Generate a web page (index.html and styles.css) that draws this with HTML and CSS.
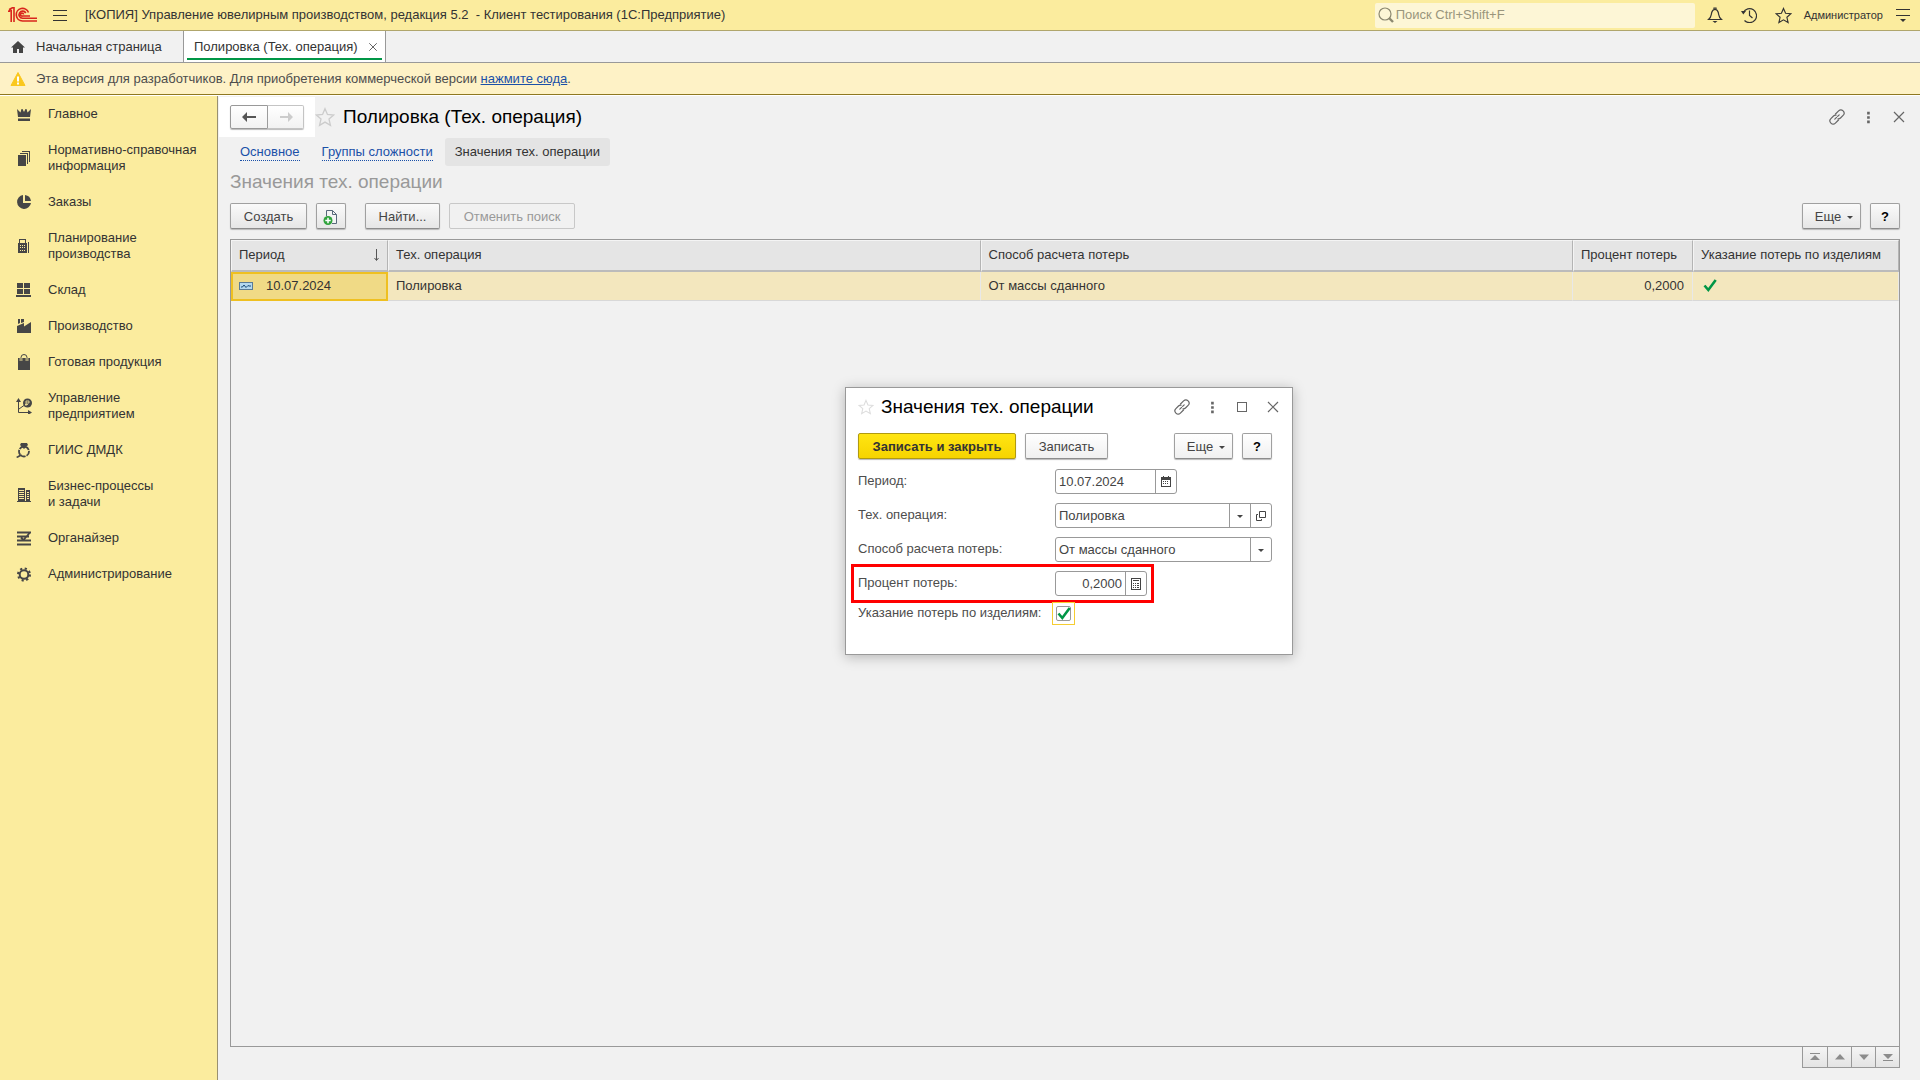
FILE: index.html
```html
<!DOCTYPE html>
<html lang="ru">
<head>
<meta charset="utf-8">
<title>Полировка (Тех. операция)</title>
<link rel="stylesheet" href="styles.css">
</head>
<body>
<svg class="defs" aria-hidden="true">
  <symbol id="i-star" viewBox="0 0 18 18"><path d="M9 1.500l2.200 5.200 5.600.5-4.200 3.700 1.300 5.600L9 13.600l-4.900 2.900 1.300-5.600L1.200 7.200l5.600-.5z" fill="none" stroke="currentColor" stroke-width="1.200"/></symbol>
  <symbol id="i-link" viewBox="0 0 16 16"><g fill="none" stroke="currentColor" stroke-width="1.200" stroke-linecap="round"><path d="M6.500 5L9.600 1.900a3.100 3.100 0 0 1 4.500 4.500L11.500 9a3 3 0 0 1-2.500.9"/><path d="M9.500 11l-3.100 3.100a3.100 3.100 0 0 1-4.500-4.500L4.500 7A3 3 0 0 1 7 6.100"/><path d="M5.800 10.200l4.400-4.400" stroke-dasharray="2.500 1.500"/></g></symbol>
  <symbol id="i-dots" viewBox="0 0 16 16"><path d="M7 2h3v3H7zM7 7h3v3H7zM7 12h3v3H7z" fill="currentColor"/></symbol>
  <symbol id="i-close" viewBox="0 0 16 16"><path d="M3 3l10 10M13 3L3 13" stroke="currentColor" stroke-width="1.200"/></symbol>
  <symbol id="i-down" viewBox="0 0 8 8"><path d="M1 3h6L4 6z" fill="currentColor"/></symbol>
  <symbol id="i-check" viewBox="0 0 16 16"><path d="M2.500 7.500l3.800 4.500L13.700 2" fill="none" stroke="#009646" stroke-width="2.600"/></symbol>
</svg>

<header class="topbar">
  <svg class="logo" viewBox="0 0 30 16" aria-label="1С" role="img"><g fill="none" stroke="#d9251c" stroke-width="1.600"><path d="M0 4.200h2.200M1.200 2.500L4 1M3.200 3v12M6 15V.800H4.200L1 3.500"/><path d="M20.500 5.500A6.300 6.300 0 1 0 14.500 14H29"/><path d="M17.800 6A3.600 3.600 0 1 0 14.500 11.300H29"/><path d="M15.500 7.500a1.500 1.500 0 1 0-1 1.500H22"/></g></svg>
  <button class="icon-btn burger" aria-label="Меню"><svg width="14" height="14" viewBox="0 0 14 14"><path d="M0 2.500h14M0 7.500h14M0 12.500h14" stroke="currentColor"/></svg></button>
  <div class="app-title">[КОПИЯ] Управление ювелирным производством, редакция 5.2&nbsp; - Клиент тестирования (1С:Предприятие)</div>
  <label class="search">
    <svg width="16" height="16" viewBox="0 0 16 16"><circle cx="7" cy="7" r="6" fill="none" stroke="currentColor" stroke-width="1.200"/><path d="M11 11l4 4" stroke="currentColor" stroke-width="2.400"/></svg>
    <input type="text" placeholder="Поиск Ctrl+Shift+F" aria-label="Поиск">
  </label>
  <div class="top-tools">
    <button class="icon-btn" aria-label="Уведомления"><svg width="16" height="16" viewBox="0 0 16 16"><path d="M1.500 12.500h13c-3-2.500-2.500-4-3.200-7C10.800 3.500 9.500 2.500 8 2.500S5.200 3.500 4.700 5.500c-.7 3-.2 4.500-3.200 7zM7 2.500V1h2v1.500" fill="none" stroke="currentColor" stroke-width="1.200"/><path d="M5.500 14h5L8 16z" fill="currentColor"/></svg></button>
    <button class="icon-btn" aria-label="История"><svg width="16" height="16" viewBox="0 0 16 16"><path d="M2.300 5.500A7 7 0 1 1 3.500 13.500M8.500 3.500v5l3 2.500" fill="none" stroke="currentColor" stroke-width="1.200"/><path d="M0 4h5L2.300 7.500z" fill="currentColor"/></svg></button>
    <button class="icon-btn" aria-label="Избранное"><svg width="17" height="17"><use href="#i-star"/></svg></button>
  </div>
  <a class="user" href="#">Администратор</a>
  <button class="icon-btn" aria-label="Настройки"><svg width="14" height="14" viewBox="0 0 14 14"><path d="M0 1.500h14M0 7.500h14" stroke="currentColor"/><path d="M4 11h6l-3 3z" fill="currentColor"/></svg></button>
</header>

<nav class="tabs">
  <a class="tab home" href="#"><svg width="16" height="14" viewBox="0 0 16 14"><path d="M8 1L1 7.500h2V13h4V9h2v4h4V7.500h2z" fill="#444"/></svg>Начальная страница</a>
  <a class="tab current" href="#"><span>Полировка (Тех. операция)</span><svg width="12" height="12"><use href="#i-close"/></svg></a>
</nav>

<div class="notice">
  <svg width="16" height="16" viewBox="0 0 16 16"><path d="M8 1.500L15 14.500H1z" fill="#fac81e" stroke="#fac81e" stroke-linejoin="round"/><path d="M7 5.500h2v5H7zM7 11.500h2v2H7z" fill="#fff"/></svg>
  <p>Эта версия для разработчиков. Для приобретения коммерческой версии <a href="#">нажмите сюда</a>.</p>
</div>

<div class="workspace">
  <nav class="sidebar">
    <a href="#"><svg viewBox="0 0 16 16"><path d="M1 3l3.500 3.500L5.500 3h1L8 6l1.500-3h1l1 3.500L15 3l-1 8H2zM2 12.500h12V15H2z"/></svg>Главное</a>
    <a href="#"><svg viewBox="0 0 16 16"><path d="M2 5h8v11H2zM4 3h8v11h-1V4H4zM6 1h8v11h-1V2H6z"/></svg>Нормативно-справочная<br>информация</a>
    <a href="#"><svg viewBox="0 0 16 16"><path d="M7 1v8h8A7 7 0 1 1 7 1zM9 1a7 7 0 0 1 6 6H9z"/></svg>Заказы</a>
    <a href="#"><svg viewBox="0 0 16 16"><path fill-rule="evenodd" d="M2 5h1V1h7v4h1v10H2zM4 2v3h5V2zM4 7v1h1V7zm2 0v1h1V7zm2 0v1h1V7zM4 9v1h1V9zm2 0v1h1V9zm2 0v1h1V9zm-4 3v1h1v-1zm2 0v1h1v-1zm2 0v1h1v-1zM12 4h1v11h-1z"/></svg>Планирование<br>производства</a>
    <a href="#"><svg viewBox="0 0 16 16"><path d="M1 1h6v5H1zM8 1h6v5H8zM1 7h6v5H1zM8 7h6v5H8zM0 13h15v2H0z"/></svg>Склад</a>
    <a href="#"><svg viewBox="0 0 16 16"><path d="M2 1h2v4l-2 1zM5 1h3v3L5 5zM1 8l7-3v3.500L15 4v11H1z"/></svg>Производство</a>
    <a href="#"><svg viewBox="0 0 16 16"><path d="M2 4h12v12H2z"/><path d="M5 7V4a3 3 0 0 1 6 0v3" fill="none" stroke="#fbec9e" stroke-width="2.600"/><path d="M5 7V3.500a3 3 0 0 1 6 0V7" fill="none" stroke="#464646"/></svg>Готовая продукция</a>
    <a href="#"><svg viewBox="0 0 16 16"><path d="M2.500 3v11.500H14M3 11l7-5" fill="none" stroke="#464646"/><path d="M2.500 0L5 4H0zM16 14.500L12 12v5z"/><circle cx="11.500" cy="5" r="4.500"/><path d="M10 3h3v2h-3zM10 5v3M9 6.500h3" fill="none" stroke="#fbec9e" stroke-width=".800"/></svg>Управление<br>предприятием</a>
    <a href="#"><svg viewBox="0 0 16 16"><circle cx="8" cy="9.500" r="5" fill="none" stroke="#464646" stroke-width="1.800" stroke-dasharray="5 1"/><path d="M5 1h6l1 2-4 4-4-4zM5 12l1 1.500L1.500 16 0 15z"/></svg>ГИИС ДМДК</a>
    <a href="#"><svg viewBox="0 0 16 16"><path fill-rule="evenodd" d="M2 2h7v13H2zM3 4v1h5V4zm0 2v1h5V6zm0 2v1h5V8zm0 2v1h5v-1zm0 2v1h5v-1zM10 4h4v11h-4zm1 2v1h2V6zm0 2v1h2V8zm0 2v1h2v-1zm0 2v1h2v-1zM1 15h14v1H1z"/></svg>Бизнес-процессы<br>и задачи</a>
    <a href="#"><svg viewBox="0 0 16 16"><path d="M1 2.500h14M1 6.500h12M1 10.500h14M1 14.500h14M14 2.500L7.500 10 5 7.500" fill="none" stroke="#464646" stroke-width="1.800"/></svg>Органайзер</a>
    <a href="#"><svg viewBox="0 0 16 16"><circle cx="8" cy="8.500" r="4.300" fill="none" stroke="#464646" stroke-width="2"/><circle cx="8" cy="8.500" r="6" fill="none" stroke="#464646" stroke-width="2" stroke-dasharray="2.200 2.512"/></svg>Администрирование</a>
  </nav>

  <main class="page">
    <div class="page-head">
      <div class="history">
        <button aria-label="Назад"><svg width="16" height="12" viewBox="0 0 16 12"><path d="M6 1v4h9v2H6v4L1 6z" fill="#555"/></svg></button><button aria-label="Вперед" disabled><svg width="16" height="12" viewBox="0 0 16 12"><path d="M10 1v4H2v2h8v4l5-5z" fill="#ccc"/></svg></button>
      </div>
      <svg class="fav" width="20" height="20"><use href="#i-star"/></svg>
      <h1>Полировка (Тех. операция)</h1>
      <div class="window-tools">
        <button class="icon-btn" aria-label="Ссылка"><svg width="16" height="16"><use href="#i-link"/></svg></button>
        <button class="icon-btn" aria-label="Действия"><svg width="14" height="14"><use href="#i-dots"/></svg></button>
        <button class="icon-btn" aria-label="Закрыть"><svg width="16" height="16"><use href="#i-close"/></svg></button>
      </div>
    </div>
    <nav class="sections">
      <a href="#"><span>Основное</span></a>
      <a href="#"><span>Группы сложности</span></a>
      <a class="current" href="#">Значения тех. операции</a>
    </nav>
    <h2>Значения тех. операции</h2>
    <div class="toolbar">
      <button class="btn w-create">Создать</button>
      <button class="btn w-icon" aria-label="Скопировать"><svg width="16" height="18" viewBox="0 0 16 18"><path d="M3.500 8V2.500h6l4 4v9H9M9.500 2.500v4h4" fill="#f4f4f4" stroke="#57687a"/><circle cx="5" cy="12.500" r="4.500" fill="#2fa23c"/><path d="M5 9.800v5.400M2.300 12.500h5.400" stroke="#fff" stroke-width="1.500"/></svg></button>
      <button class="btn w-find">Найти...</button>
      <button class="btn w-cancel" disabled>Отменить поиск</button>
      <span class="spacer"></span>
      <button class="btn w-more">Еще<svg width="8" height="8"><use href="#i-down"/></svg></button>
      <button class="btn w-icon help">?</button>
    </div>
    <div class="grid">
      <table>
        <colgroup><col class="c-date"><col><col><col class="c-pct"><col class="c-flag"></colgroup>
        <thead><tr>
          <th><div class="cell"><span>Период</span><svg width="7" height="14" viewBox="0 0 7 14"><path d="M3.500 1v11M1.500 10l2 2.500 2-2.500" fill="none" stroke="#555"/></svg></div></th>
          <th>Тех. операция</th><th>Способ расчета потерь</th><th>Процент потерь</th><th>Указание потерь по изделиям</th>
        </tr></thead>
        <tbody><tr>
          <td class="active"><div class="cell date"><svg width="16" height="10" viewBox="0 0 16 10"><rect x="1.500" y="1.500" width="13" height="7" fill="#b4d8ee" stroke="#5a7b96"/><path d="M3 6h1.500L6 4l2 2.500 2-2 1 .5h2" fill="none" stroke="#174a78"/></svg><span>10.07.2024</span></div></td>
          <td>Полировка</td><td>От массы сданного</td><td class="num">0,2000</td><td><svg width="18" height="16"><use href="#i-check"/></svg></td>
        </tr></tbody>
      </table>
    </div>
    <div class="pager">
      <button aria-label="В начало"><svg width="12" height="8" viewBox="0 0 12 8"><path d="M1 0h10v1H1zM6 2l5 5H1z"/></svg></button>
      <button aria-label="Вверх"><svg width="12" height="8" viewBox="0 0 12 8"><path d="M6 1l5 5.500H1z"/></svg></button>
      <button aria-label="Вниз"><svg width="12" height="8" viewBox="0 0 12 8"><path d="M1 1.500h10L6 7z"/></svg></button>
      <button aria-label="В конец"><svg width="12" height="8" viewBox="0 0 12 8"><path d="M1 1h10L6 6zM1 7h10v1H1z"/></svg></button>
    </div>

    <section class="dialog" role="dialog" aria-labelledby="dlg-title">
      <div class="dialog-head">
        <svg class="fav" width="16" height="16"><use href="#i-star"/></svg>
        <h3 id="dlg-title">Значения тех. операции</h3>
        <div class="window-tools">
          <button class="icon-btn" aria-label="Ссылка"><svg width="16" height="16"><use href="#i-link"/></svg></button>
          <button class="icon-btn" aria-label="Действия"><svg width="14" height="14"><use href="#i-dots"/></svg></button>
          <button class="icon-btn" aria-label="Развернуть"><svg width="16" height="16" viewBox="0 0 16 16"><rect x="3.500" y="3.500" width="9" height="9" fill="none" stroke="currentColor"/></svg></button>
          <button class="icon-btn" aria-label="Закрыть"><svg width="16" height="16"><use href="#i-close"/></svg></button>
        </div>
      </div>
      <div class="toolbar">
        <button class="btn primary">Записать и закрыть</button>
        <button class="btn w-save">Записать</button>
        <span class="spacer"></span>
        <button class="btn w-more">Еще<svg width="8" height="8"><use href="#i-down"/></svg></button>
        <button class="btn w-icon help">?</button>
      </div>
      <form class="fields">
        <div class="row"><label for="f-date">Период:</label>
          <div class="field f-date"><input id="f-date" type="text" value="10.07.2024"><button type="button" aria-label="Календарь"><svg width="10" height="11" viewBox="0 0 10 11"><path fill-rule="evenodd" d="M0 1h2V0h1v1h4V0h1v1h2v10H0zM1 4v6h8V4z"/><path d="M2 5h1v1H2zM4 5h1v1H4zM6 5h1v1H6zM2 7h1v1H2zM4 7h1v1H4zM6 7h1v1H6z"/></svg></button></div></div>
        <div class="row"><label for="f-op">Тех. операция:</label>
          <div class="field f-wide"><select id="f-op"><option>Полировка</option></select><span class="drop"><svg width="8" height="8"><use href="#i-down"/></svg></span><button type="button" aria-label="Открыть"><svg width="10" height="10" viewBox="0 0 10 10"><path d="M3.500.500h6v6h-6zM2 3.500H.500v6h5V8" fill="none" stroke="#444"/></svg></button></div></div>
        <div class="row"><label for="f-way">Способ расчета потерь:</label>
          <div class="field f-wide"><select id="f-way"><option>От массы сданного</option></select><span class="drop"><svg width="8" height="8"><use href="#i-down"/></svg></span></div></div>
        <div class="row marked"><label for="f-pct">Процент потерь:</label>
          <div class="field f-pct"><input id="f-pct" type="text" value="0,2000"><button type="button" aria-label="Калькулятор"><svg width="10" height="12" viewBox="0 0 10 12"><path fill-rule="evenodd" d="M0 0h10v12H0zM1 1v10h8V1z"/><path d="M2 2h6v1H2zM2 5h1v1H2zM4 5h1v1H4zM6 5h2v1H6zM2 7h1v1H2zM4 7h1v1H4zM6 7h2v1H6zM2 9h1v1H2zM4 9h1v1H4zM6 9h2v1H6z"/></svg></button></div></div>
        <div class="row flag"><label for="f-flag">Указание потерь по изделиям:</label>
          <span class="check"><input id="f-flag" type="checkbox" checked><svg width="16" height="16"><use href="#i-check"/></svg></span></div>
      </form>
    </section>
  </main>
</div>
</body>
</html>
```

FILE: styles.css
```css
*, *::before, *::after { box-sizing: border-box; }
body {
  margin: 0;
  min-height: 100vh;
  display: flex;
  flex-direction: column;
  background: #f1f1f1;
  color: #333;
  font: 13px/16px "Liberation Sans", Arial, sans-serif;
}
button, input, select { font: inherit; color: inherit; }
svg { flex: none; display: block; }
h1, h2, h3, p { margin: 0; font-weight: 400; }
a { color: inherit; text-decoration: none; }
.defs { position: absolute; width: 0; height: 0; }
.spacer { flex: 1; }
.icon-btn { padding: 0; border: 0; background: none; }

/* Application bar */
.topbar {
  display: flex;
  align-items: center;
  height: 31px;
  padding: 0 10px 0 8px;
  background: #fbec9e;
  border-bottom: 1px solid #b0a66c;
}
.logo { width: 30px; height: 16px; }
.burger { margin: 0 18px 0 15px; }
.app-title { flex: 1; white-space: pre; }
.search {
  display: flex;
  align-items: center;
  gap: 2px;
  width: 320px;
  height: 25px;
  padding-left: 3px;
  border-radius: 2px;
  background: #fdf6d6;
  color: #8c8870;
}
.search input { flex: 1; min-width: 0; padding: 0; border: 0; outline: 0; background: none; }
.search input::placeholder { color: #99957c; opacity: 1; }
.top-tools { display: flex; gap: 18px; margin: 0 12px; }
.user { margin-right: 13px; font-size: 11px; }

/* Open windows */
.tabs { display: flex; height: 32px; border-bottom: 1px solid #999; }
.tab { display: flex; align-items: center; }
.home { width: 183px; padding-left: 10px; gap: 10px; }
.current svg { color: #555; }
.tab.current {
  position: relative;
  gap: 9px;
  padding: 0 6px 0 10px;
  border: solid #999;
  border-width: 0 1px;
  background: #fff;
}
.tab.current::after {
  content: "";
  position: absolute;
  inset: auto 3px 2px;
  height: 2px;
  background: #009646;
}

.notice {
  display: flex;
  align-items: center;
  gap: 10px;
  height: 32px;
  padding-left: 10px;
  background: #fef2c6;
  border-bottom: 1px solid #8f7820;
  color: #4d4d4d;
}
.notice a { color: #1a50a8; text-decoration: underline; }

.workspace { flex: 1; display: flex; border-top: 1px solid #fff; }

/* Sections panel */
.sidebar { width: 218px; background: #fbec9e; border-right: 1px solid #999070; }
.sidebar a {
  display: flex;
  align-items: center;
  gap: 16px;
  padding: 10px 0 10px 16px;
}
.sidebar svg { width: 16px; height: 16px; fill: #464646; }

/* Page */
.page {
  position: relative;
  flex: 1;
  min-width: 0;
  display: flex;
  flex-direction: column;
  padding: 1px 20px 12px 1px;
}
.page > * { margin-left: 11px; }
.page-head { display: flex; align-items: center; height: 40px; }
.page > .page-head { margin-left: 0; }
.history { display: flex; height: 40px; padding: 8px 11px; background: #fff; }
.history button {
  display: flex;
  align-items: center;
  justify-content: center;
  width: 38px;
  height: 24px;
  padding: 0;
  border: 1px solid #999;
  border-radius: 2px 0 0 2px;
  background: linear-gradient(#fff, #f2f2f2);
  box-shadow: 0 1px 1px #bbb;
}
.history button + button { width: 36px; border-color: #c4c4c4; border-left: 0; border-radius: 0 2px 2px 0; }
.fav { color: #ccc; }
.page-head .fav { margin-right: 8px; }
h1, h2, h3 { font-size: 19px; line-height: 22px; }
h1, h3 { color: #000; }
h2 { color: #999; }
.window-tools { display: flex; align-items: center; gap: 16px; margin-left: auto; color: #666; }
.page-head .window-tools { margin-right: -7px; }

.sections { display: flex; gap: 2px; height: 28px; margin-top: 1px; line-height: 28px; }
.sections a { height: 28px; padding: 0 10px; }
.sections a:not(.current) { color: #1a50a8; }
.sections span { padding-bottom: 1px; border-bottom: 1px dotted #1a50a8; }
.sections .current { border-radius: 3px; background: #e4e4e4; }
h2 { margin-top: 5px; }

.toolbar { display: flex; height: 27px; }
.page > .toolbar { margin-top: 10px; }
.btn {
  display: flex;
  align-items: center;
  justify-content: center;
  height: 26px;
  padding: 1px 0 0;
  border: 1px solid #a0a0a0;
  border-bottom-color: #8c8c8c;
  border-radius: 2px;
  background: linear-gradient(#fafafa, #e6e6e6);
  box-shadow: 0 1px 1px #b8b8b8;
  color: #444;
}
.btn + .btn { margin-left: 9px; }
.btn:disabled { color: #999; border-color: #c8c8c8; box-shadow: none; background: #f1f1f1; }
.w-create { width: 77px; }
.w-icon { width: 30px; }
.btn.w-find { width: 75px; margin-left: 19px; }
.w-cancel { width: 126px; }
.w-more { width: 59px; gap: 5px; padding-left: 6px; }
.w-save { width: 83px; }
.help { color: #000; font-weight: 700; }

.grid { flex: 1; margin-top: 9px; border: 1px solid #999; }
table { width: 100%; table-layout: fixed; border-collapse: separate; border-spacing: 0; }
.c-date { width: 157px; }
.c-pct { width: 120px; }
.c-flag { width: 206px; }
th, td { padding: 0 8px; text-align: left; font-weight: 400; white-space: nowrap; overflow: hidden; }
th {
  height: 32px;
  padding: 0 7px 1px;
  background: #e5e5e5;
  border: 1px solid #f4f4f4;
  border-right-color: #b4b4b4;
  border-bottom: 2px solid #bbb;
}
td { height: 29px; background: #f3e7be; border-right: 1px solid #e8e8e8; border-bottom: 1px solid #d8d8d8; }
td.num { text-align: right; }
td.active { padding: 0 5px 1px; background: #f0da86; border: 2px solid #efc021; }
.cell { display: flex; align-items: center; justify-content: space-between; }
.date { justify-content: flex-start; gap: 12px; }

.pager { display: flex; align-self: flex-end; height: 22px; margin-top: -1px; border: 1px solid #999; }
.pager button {
  display: flex;
  align-items: center;
  justify-content: center;
  width: 24px;
  padding: 0;
  border: 0;
  background: linear-gradient(#f4f4f4, #e4e4e4);
}
.pager button + button { border-left: 1px solid #999; }
.pager svg { fill: #8c8c8c; }

/* Record dialog */
.page > .dialog {
  position: absolute;
  top: 291px;
  left: 50%;
  width: 448px;
  margin-left: -224px;
  padding: 7px 20px 29px 12px;
  border: 1px solid #999;
  background: #fff;
  box-shadow: 0 2px 12px rgba(0, 0, 0, .25);
}
.dialog-head { display: flex; align-items: center; gap: 7px; height: 24px; }
.dialog .fav { color: #ddd; }
.dialog-head .window-tools { gap: 15px; margin-right: -9px; }
.dialog .toolbar { margin-top: 14px; }
.dialog .btn { background: linear-gradient(#fff, #f0f0f0); }
.dialog .btn.primary {
  width: 158px;
  border-color: #b09a10;
  background: linear-gradient(#ffe512, #f6d400);
  font-weight: 700;
  color: #333;
}
.fields { display: flex; flex-direction: column; gap: 9px; margin-top: 9px; color: #4d4d4d; }
.row { position: relative; display: flex; height: 25px; }
.row label { width: 197px; padding-top: 4px; white-space: nowrap; }
.field { display: flex; border: 1px solid #999; border-radius: 3px; background: #fff; color: #444; }
.field input, .field select {
  flex: 1;
  min-width: 0;
  padding: 0 3px;
  border: 0;
  outline: 0;
  appearance: none;
  background: none;
}
.field button, .drop {
  display: flex;
  align-items: center;
  justify-content: center;
  width: 21px;
  padding: 0;
  border: 0;
  border-left: 1px solid #999;
  background: none;
}
.field button svg { fill: #444; }
.drop { pointer-events: none; }
.f-date { width: 122px; }
.f-wide { width: 217px; }
.f-pct { width: 92px; }
.f-pct input { text-align: right; }
.marked::after {
  content: "";
  position: absolute;
  top: -7px;
  left: -7px;
  width: 303px;
  height: 39px;
  border: 3px solid #f00;
  pointer-events: none;
}
.row.flag { height: 23px; margin-top: -3px; }
.row.flag label { width: 194px; padding-top: 3px; }
.check { display: grid; place-items: center; width: 23px; height: 23px; border: 1px solid #f5cd32; }
.check > * { grid-area: 1 / 1; }
.check input { appearance: none; width: 15px; height: 15px; margin: 0; border: 1px solid #999; border-radius: 2px; }
.check svg { pointer-events: none; }
```
